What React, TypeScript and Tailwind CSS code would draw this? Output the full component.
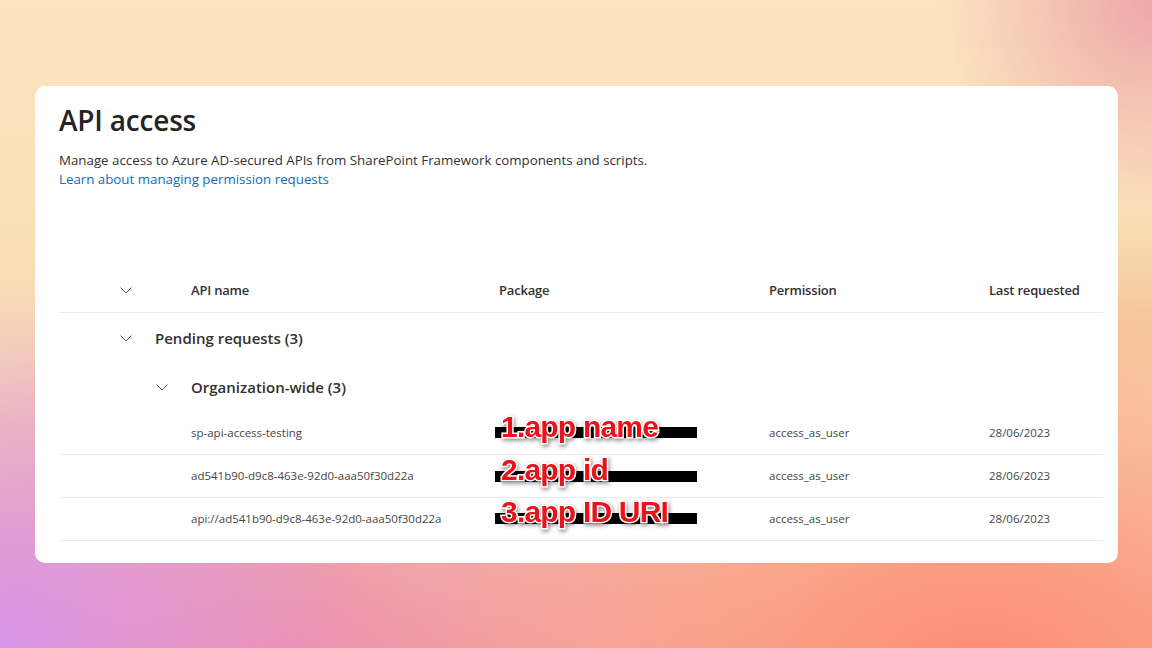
import React from "react";

function Chevron({ className = "" }: { className?: string }) {
  return (
    <svg width="12" height="7" viewBox="0 0 12 7" className={className} fill="none">
      <path d="M0.8 0.8 L6 6 L11.2 0.8" stroke="#605e5c" strokeWidth="1" strokeLinecap="round" strokeLinejoin="round" />
    </svg>
  );
}

const rows = [
  { name: "sp-api-access-testing", label: "1.app name", bar: "top-[15px]", text: "-top-[3px]" },
  { name: "ad541b90-d9c8-463e-92d0-aaa50f30d22a", label: "2.app id", bar: "top-[16px]", text: "-top-[3px]" },
  { name: "api://ad541b90-d9c8-463e-92d0-aaa50f30d22a", label: "3.app ID URI", bar: "top-[15px]", text: "-top-[4px]" },
];

export default function App() {
  return (
    <div className="w-[1152px] h-[648px] overflow-hidden pt-[86px] pl-[35px] font-['Open_Sans',sans-serif] bg-[radial-gradient(circle_at_0%_100%,#d892e8_0%,rgba(216,146,232,0)_28%),radial-gradient(ellipse_at_85%_105%,#fd8a74_0%,rgba(253,138,116,0)_42%),radial-gradient(ellipse_at_25%_105%,#ee8cab_0%,rgba(238,140,171,0)_42%),radial-gradient(circle_at_100%_0%,#eda6aa_0%,rgba(237,166,170,0)_16%),radial-gradient(ellipse_at_100%_50%,#f5c89c_0%,rgba(245,200,156,0)_25%),linear-gradient(180deg,#fce4bf_0%,#f9dbb2_55%,#f6c4a4_100%)]">
      <div className="w-[1083px] h-[477px] bg-white rounded-[10px] px-6 pt-[16px]">
        <h1 className="text-[28px] leading-[36px] font-semibold text-[#242424] tracking-[-0.2px]">API access</h1>
        <p className="mt-[13px] text-[13.3px] leading-[19px] text-[#323130]">
          Manage access to Azure AD-secured APIs from SharePoint Framework components and scripts.
        </p>
        <a className="block text-[13.3px] leading-[19px] text-[#0f6cbd]">Learn about managing permission requests</a>

        <div className="mt-[80px] w-[1044px]">
          <div className="grid grid-cols-[132px_308px_270px_220px_1fr] h-[44px] items-center border-b border-[#edebe9] text-[13px] font-semibold text-[#323130] tracking-[-0.2px]">
            <div className="pl-[61px] flex items-center"><Chevron /></div>
            <div>API name</div>
            <div>Package</div>
            <div>Permission</div>
            <div>Last requested</div>
          </div>

          <div className="h-[50px] flex items-center">
            <div className="w-[96px] pl-[61px] flex items-center"><Chevron /></div>
            <div className="text-[15px] font-semibold text-[#323130]">Pending requests (3)</div>
          </div>
          <div className="h-[49px] flex items-center">
            <div className="w-[132px] pl-[97px] flex items-center"><Chevron /></div>
            <div className="text-[15px] font-semibold text-[#323130]">Organization-wide (3)</div>
          </div>

          {rows.map((r) => (
            <div key={r.name} className="grid grid-cols-[132px_308px_270px_220px_1fr] h-[43px] items-center border-b border-[#edebe9] text-[11.5px] text-[#484644]">
              <div />
              <div>{r.name}</div>
              <div className="relative h-full">
                <div className={`absolute left-[-4px] w-[202px] h-[11px] bg-black ${r.bar}`} />
                <div className={`absolute left-[2px] ${r.text} whitespace-nowrap font-['Liberation_Sans',sans-serif] font-bold text-[30px] leading-[36px] tracking-[-0.8px] text-[#e8131b] [-webkit-text-stroke:3px_white] [paint-order:stroke_fill] [filter:drop-shadow(1px_2px_2px_rgba(0,0,0,0.45))]`}>
                  {r.label}
                </div>
              </div>
              <div>access_as_user</div>
              <div>28/06/2023</div>
            </div>
          ))}
        </div>
      </div>
    </div>
  );
}
